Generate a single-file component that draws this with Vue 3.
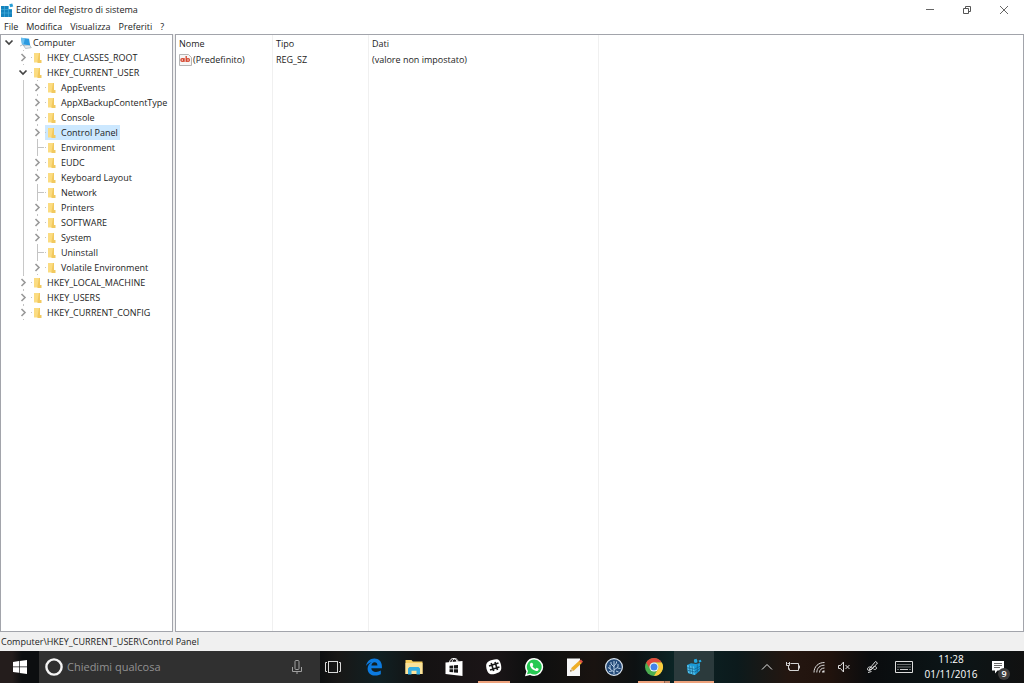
<script setup>
import { ref } from 'vue'

const menus = ['File', 'Modifica', 'Visualizza', 'Preferiti', '?']

const roots = [
  { name: 'HKEY_CLASSES_ROOT' },
  {
    name: 'HKEY_CURRENT_USER',
    children: [
      { name: 'AppEvents' },
      { name: 'AppXBackupContentType' },
      { name: 'Console' },
      { name: 'Control Panel' },
      { name: 'Environment', leaf: true },
      { name: 'EUDC' },
      { name: 'Keyboard Layout' },
      { name: 'Network', leaf: true },
      { name: 'Printers' },
      { name: 'SOFTWARE' },
      { name: 'System' },
      { name: 'Uninstall', leaf: true },
      { name: 'Volatile Environment' },
    ],
  },
  { name: 'HKEY_LOCAL_MACHINE' },
  { name: 'HKEY_USERS' },
  { name: 'HKEY_CURRENT_CONFIG' },
]

const selected = ref('Control Panel')
const query = ref('')
</script>

<template>
  <div class="desktop">
    <header class="titlebar">
      <svg class="app-icon" viewBox="0 0 14 14" aria-hidden="true">
        <path d="M1 3h7.500v3H12v8H1z" fill="#1583bd" />
        <path d="M1 6.500h11M1 10h11M4.500 3v11M8.500 3v11" stroke="#4bb4e0" stroke-width=".6" />
        <path d="M9.300 1.200l3-.8.900 3-3 .8z" fill="#2a9fd6" />
      </svg>
      <h1>Editor del Registro di sistema</h1>
      <div class="window-buttons">
        <button type="button" aria-label="Riduci a icona">
          <svg viewBox="0 0 10 10"><path d="M1 4.500h8" stroke="#666" /></svg>
        </button>
        <button type="button" aria-label="Ripristina">
          <svg viewBox="0 0 10 10"><path d="M1.500 3.500h5v5h-5zM3.500 3V1.500h5v5H7" fill="none" stroke="#555" /></svg>
        </button>
        <button type="button" aria-label="Chiudi">
          <svg viewBox="0 0 10 10"><path d="M1 1l8 8M9 1L1 9" stroke="#666" /></svg>
        </button>
      </div>
    </header>

    <nav class="menubar">
      <button v-for="m in menus" :key="m" type="button">{{ m }}</button>
    </nav>

    <main class="panes">
      <section class="tree">
        <div class="row">
          <svg class="twist" viewBox="0 0 14 15"><path d="M3.500 5.500l3.500 3.500L10.500 5.500" fill="none" stroke="#444" stroke-width="1.700" /></svg>
          <button type="button" class="key">
            <svg class="icon" viewBox="0 0 12 12">
              <path d="M3.500 8.500l6-.5 1.800 2.700-5.800.8z" fill="#e4eaee" stroke="#93a2ad" stroke-width=".6" />
              <path d="M1 .800l8 1 1.200 6.500L2 7.500z" fill="#2c9be0" />
              <path d="M1 .800l4 .5L3.500 7.600 2 7.500z" fill="#6cc0f0" />
              <path d="M0 9l2.500-1.200 2 1.200" fill="none" stroke="#93a2ad" stroke-width=".7" />
            </svg>
            Computer
          </button>
        </div>
        <ul class="level-one">
          <li v-for="root in roots" :key="root.name">
            <div class="row">
              <svg class="twist" viewBox="0 0 14 15">
                <path v-if="root.children" d="M3.500 5.500l3.500 3.500L10.500 5.500" fill="none" stroke="#444" stroke-width="1.700" />
                <template v-else>
                  <path d="M7.500 0v1M7.500 14v1" stroke="#c4c4c4" />
                  <path d="M5.500 4l3.500 3.500L5.500 11" fill="none" stroke="#999" stroke-width="1.600" />
                </template>
              </svg>
              <button type="button" class="key branch" @click="selected = root.name">
                <svg class="icon" viewBox="0 0 12 12">
                  <path d="M0 1h6v9.500H0z" fill="#fbdc82" /><path d="M5 1h1v7h1.500v3H3.500V9z" fill="#f2c95f" />
                </svg>
                {{ root.name }}
              </button>
            </div>
            <ul v-if="root.children" class="level-two">
              <li v-for="key in root.children" :key="key.name" class="row">
                <svg class="twist" viewBox="0 0 14 15">
                  <path v-if="key.leaf" d="M7.500 0v15M7.500 7.500H14" stroke="#c4c4c4" />
                  <template v-else>
                    <path d="M7.500 0v1M7.500 14v1" stroke="#c4c4c4" />
                    <path d="M5.500 4l3.500 3.500L5.500 11" fill="none" stroke="#999" stroke-width="1.600" />
                  </template>
                </svg>
                <button type="button" class="key branch" :class="{ selected: key.name === selected }" @click="selected = key.name">
                  <svg class="icon" viewBox="0 0 12 12">
                    <path d="M0 1h6v9.500H0z" fill="#fbdc82" /><path d="M5 1h1v7h1.500v3H3.500V9z" fill="#f2c95f" />
                  </svg>
                  {{ key.name }}
                </button>
              </li>
            </ul>
          </li>
        </ul>
      </section>

      <section class="values">
        <table>
          <colgroup><col class="c-name"><col class="c-type"><col class="c-data"><col></colgroup>
          <thead>
            <tr><th>Nome</th><th>Tipo</th><th>Dati</th><td></td></tr>
          </thead>
          <tbody>
            <tr>
              <td>
                <span class="value-name">
                  <svg class="string-icon" viewBox="0 0 13 12">
                    <path d="M.5.500h9l3 3v8H.5z" fill="#f6f6f6" stroke="#b5b5b5" />
                    <g fill="none" stroke="#d5432b" stroke-width="1.300">
                      <circle cx="3.300" cy="6" r="1.400" /><path d="M5 4v4M7.200 2v6" /><circle cx="9" cy="6" r="1.400" />
                    </g>
                  </svg>
                  (Predefinito)
                </span>
              </td>
              <td>REG_SZ</td>
              <td>(valore non impostato)</td>
              <td></td>
            </tr>
            <tr class="rest"><td></td><td></td><td></td><td></td></tr>
          </tbody>
        </table>
      </section>
    </main>

    <footer class="statusbar">Computer\HKEY_CURRENT_USER\Control Panel</footer>

    <div class="taskbar">
      <button type="button" class="start" aria-label="Start">
        <svg viewBox="0 0 14 14"><path d="M0 2l6-.9v5.500H0zM6.700 1L14 0v6.600H6.700zM0 7.300h6v5.500L0 12zM6.700 7.300H14V14l-7.300-1z" fill="#fff" /></svg>
      </button>
      <div class="search">
        <svg class="cortana" viewBox="0 0 18 18"><circle cx="9" cy="9" r="7.600" fill="none" stroke="#f4f4f4" stroke-width="2.400" /></svg>
        <input v-model="query" type="text" placeholder="Chiedimi qualcosa" aria-label="Chiedimi qualcosa">
        <button type="button" aria-label="Microfono">
          <svg class="mic" viewBox="0 0 10 14"><g fill="none" stroke="#a0a0a0"><rect x="3" y=".5" width="4" height="9" rx="1" /><path d="M.5 7v4.500h9V7M5 11.500V14" /></g></svg>
        </button>
      </div>

      <div class="apps">
        <button type="button" class="task-view" aria-label="Visualizzazione attività">
          <svg viewBox="0 0 20 20"><g fill="none" stroke="#d8d8d8"><rect x="5.500" y="4.500" width="9" height="11" /><path d="M4 5.500H2.500v9H4M16 5.500h1.500v9H16" /></g></svg>
        </button>
        <button type="button" aria-label="Edge">
          <svg viewBox="0 0 20 20"><path d="M2 9C2.700 4.500 6 1.500 10.300 1.500c4.700 0 7.600 3.300 7.600 7.700v2H7.300c.2 2.500 2.300 3.700 4.700 3.700 1.800 0 3.400-.5 4.800-1.400v3.800c-1.700.9-3.600 1.300-5.600 1.300-4.500 0-7.600-2.700-7.600-6.900 0-2.800 1.500-5.200 4.200-6.400C4.800 6 3.200 7.100 2 9zm5.400-.6h6c0-2-1-3.200-2.800-3.200S7.600 6.500 7.400 8.400z" fill="#0c7be0" /></svg>
        </button>
        <button type="button" aria-label="Esplora file">
          <svg viewBox="0 0 20 20"><path d="M1.500 3h6l1.300 1.500h9.700V17h-17z" fill="#f7cf61" /><path d="M1.500 6h17v11h-17z" fill="#fbe39b" /><path d="M4 17.500v-6l1.500-1.500h9l1.500 1.500v6h-3.500v-3.700h-5v3.700z" fill="#35aee2" /></svg>
        </button>
        <button type="button" aria-label="Store">
          <svg viewBox="0 0 20 20"><path d="M1.500 5.500L18.500 4v15L1.500 17z" fill="#fff" /><path d="M5.500 6c0-6 7.500-6 7.500-.5M8 5.500c0-5 6-5 6-.5" fill="none" stroke="#fff" /><path d="M5.500 8.700l3.700-.3v3.200H5.500zM10 8.300l4-.3v3.600h-4zM5.500 12.300h3.700v3l-3.700-.3zM10 12.300h4v3.500l-4-.4z" fill="#151515" /></svg>
        </button>
        <button type="button" class="open" aria-label="Slack">
          <svg viewBox="0 0 20 20"><path d="M8 3C14 1.300 15.700 2.300 17 8c1 5.500-.5 7.200-5.500 8.700-5.500 1.500-7.500.3-9-5C1.300 6.300 3 4.500 8 3z" fill="#fff" /><path d="M7.200 6l2.500 8M11 5l2.500 8M5 9l9.500-3M6 13l9.500-3" stroke="#181818" stroke-width="1.600" /></svg>
        </button>
        <button type="button" aria-label="WhatsApp">
          <svg viewBox="0 0 20 20"><path d="M10.200 1a9 9 0 0 1 0 18c-1.500 0-3-.4-4.200-1L1 19.300l1.400-4.800A9 9 0 0 1 10.200 1z" fill="#fff" /><path d="M10.200 2.500a7.500 7.500 0 1 1-3.800 14L3 17.300l1-3.200a7.500 7.500 0 0 1 6.200-11.600z" fill="#26c953" /><path d="M7.300 5.800l1.200.3.8 2-.8 1.100c.8 1.300 1.700 2.100 3 2.700l1.100-1.200 2 1c.2 1.500-1.200 2.500-2.500 2.300-3.200-.6-6-3.500-6.200-6.200 0-1 .6-1.700 1.400-2z" fill="#fff" /></svg>
        </button>
        <button type="button" aria-label="Editor di testo">
          <svg viewBox="0 0 20 20"><path d="M3 1.500h13V19H3z" fill="#f7f7f7" /><path d="M6.300 14.500l1-3.500 8.200-7.500 2.400 2.500-8.200 7.700z" fill="#eeae28" /><path d="M15 4l2-1.500 2 2.300-1.500 1.500z" fill="#dd5145" /><path d="M6.300 14.500l1-3.500 2.400 2.700z" fill="#dfc69b" /><path d="M6.300 14.500l.4-1.400.9 1z" fill="#222" /></svg>
        </button>
        <button type="button" aria-label="SourceTree">
          <svg viewBox="0 0 20 20"><circle cx="10" cy="10" r="8.400" fill="#244a78" stroke="#dce5ef" stroke-width="1.200" /><path d="M10 17V4M10 15l-4-3V8M10 13l4-3V7M10 10L7 7V5M10 9l2.500-3V4.500M6.500 12L4 10.500M13.500 11l3 .5M8 14l-3 .5M12 14l2.500 1" fill="none" stroke="#b8cee5" stroke-width="1" /></svg>
        </button>
        <button type="button" class="open grouped" aria-label="Chrome">
          <svg viewBox="0 0 20 20"><circle cx="10" cy="10" r="9" fill="#4cae50" /><path d="M2.200 5.500A9 9 0 0 1 17.800 5.500H10a4.500 4.500 0 0 0-3.900 6.700z" fill="#df4a3c" /><path d="M17.800 5.500A9 9 0 0 1 10 19l3.900-6.800A4.500 4.500 0 0 0 10 5.500z" fill="#fccb3d" /><circle cx="10" cy="10" r="4.500" fill="#fff" /><circle cx="10" cy="10" r="3.500" fill="#4384e8" /></svg>
        </button>
        <button type="button" class="open active" aria-label="Editor del Registro di sistema">
          <svg viewBox="0 0 20 20">
            <path d="M3 8l4-1.800L12 7l4-1v7.500l-5 4.500-7-2z" fill="#1b9ad6" />
            <path d="M3 8l7 1.500L11 18l-7-2z" fill="#4fc0ec" />
            <path d="M3.300 10.700l7 1.600 5.700-3M3.700 13.300l7 1.700 5.300-3.500M5.500 8.500l.8 8M8 9l.8 8.500M13.300 7.500v8" fill="none" stroke="#145f88" stroke-width=".7" />
            <path d="M10 2.500l2.500-.7 1 2.200-.3 1.500-2.500.5-.8-1.800zM14.500 3.500l2.300-.8.7 2-2.200.9z" fill="#27a8df" />
          </svg>
        </button>
      </div>

      <div class="tray">
        <button type="button" aria-label="Mostra icone nascoste">
          <svg viewBox="0 0 16 16"><path d="M3 10.500l5-5 5 5" fill="none" stroke="#e8e8e8" /></svg>
        </button>
        <button type="button" aria-label="Batteria">
          <svg viewBox="0 0 16 16"><path d="M5.500 4.500h8v7h-9V9.500M14.500 6.500v3M1.500 3v3.500h3V3M3.500 6.500v4h1.500M2.500 4.500h2" fill="none" stroke="#d4d4d4" /></svg>
        </button>
        <button type="button" aria-label="Rete">
          <svg viewBox="0 0 16 16"><g fill="none" stroke="#ddd"><path d="M3 13.500C3 7.500 7.500 3.500 13.500 3.500M5.800 13.500c0-4.500 3.200-7.300 7.700-7.300M8.500 13.500c0-2.700 2-4.500 5-4.500" /></g><path d="M11 13.500c0-1.500 1-2.300 2.500-2.300v2.300z" fill="#ddd" /></svg>
        </button>
        <button type="button" class="t-sound" aria-label="Volume">
          <svg viewBox="0 0 16 16"><path d="M2.500 6.500h2l3-3.500v10l-3-3.500h-2zM9.500 6l4 4M13.500 6l-4 4" fill="none" stroke="#ddd" /></svg>
        </button>
        <button type="button" class="wide" aria-label="Penna">
          <svg viewBox="0 0 16 16"><path d="M6 9l5.500-6.500L13.500 4 8 10l-3 1zM9 10c-2-3.500-6-2-5.500.5.500 2 4.500.5 5-1.500.8-2 4-2 4 0 0 1.500-2 2-3 1M4 13.500l3.500-1" fill="none" stroke="#ddd" /></svg>
        </button>
        <button type="button" class="wide" aria-label="Tastiera">
          <svg class="keyboard" viewBox="0 0 18 12"><path d="M.5.500h17v11H.5z" fill="none" stroke="#ddd" /><path d="M2.500 3.500h13M2.500 6h13" stroke="#ccc" stroke-dasharray="1 1" /><path d="M2.500 8.500h1M5 8.500h8M14.500 8.500h1" stroke="#ccc" /></svg>
        </button>
        <button type="button" class="clock"><span>11:28</span><span>01/11/2016</span></button>
        <button type="button" class="notify" aria-label="Centro notifiche">
          <svg viewBox="0 0 14 14"><path d="M1 1h12v9.500H6.500L4 13.500v-3H1z" fill="#fff" /><path d="M3 3.500h8M3 5.500h8M3 7.500h6" stroke="#444" stroke-width=".8" /></svg>
          <span class="badge">9</span>
        </button>
      </div>
    </div>
  </div>
</template>

<style>
body {
  background: #fff;
}
</style>

<style scoped>
.desktop {
  display: flex;
  flex-direction: column;
  height: 100vh;
  overflow: hidden;
  background: #fff;
  color: #1c1c1c;
  font: 9px/15px "Open Sans", "Noto Sans", sans-serif;
}
button {
  margin: 0;
  padding: 0;
  border: 0;
  background: none;
  color: inherit;
  font: inherit;
}
svg {
  display: block;
  flex: none;
}
ul {
  margin: 0;
  padding: 0;
  list-style: none;
}
.titlebar {
  display: flex;
  align-items: center;
  height: 19px;
  flex: none;
}
.app-icon {
  width: 14px;
  height: 14px;
  margin-right: 2px;
}
h1 {
  margin: 0;
  font: inherit;
}
.window-buttons {
  display: flex;
  margin-left: auto;
  padding-right: 2px;
}
.window-buttons button {
  display: flex;
  align-items: center;
  justify-content: center;
  width: 37px;
  height: 19px;
}
.window-buttons svg {
  width: 10px;
  height: 10px;
}
.menubar {
  display: flex;
  flex: none;
  gap: 8px;
  height: 15px;
  padding-left: 4px;
}
.panes {
  display: flex;
  flex: 1;
  gap: 2px;
  min-height: 0;
  background: #f0f0f0;
}
.tree,
.values {
  box-sizing: border-box;
  border: 1px solid #a2a4ab;
  background: #fff;
  overflow: hidden;
}
.tree {
  width: 173px;
  flex: none;
  padding-left: 1px;
}
.row {
  display: flex;
  height: 15px;
}
.twist {
  width: 14px;
  height: 15px;
}
.key {
  display: flex;
  align-items: center;
  gap: 1px;
  height: 15px;
  margin-left: 1px;
  padding: 0 2px 0 3px;
  white-space: nowrap;
}
.branch {
  background: linear-gradient(#c4c4c4, #c4c4c4) left center / 1px 1px no-repeat;
}
.key.selected {
  background-color: #cce8ff;
}
.icon {
  width: 12px;
  height: 12px;
}
.level-one {
  padding-left: 14px;
}
.level-two {
  margin-left: 7px;
  padding-left: 6px;
  border-left: 1px solid #c8c8c8;
}
.values {
  flex: 1;
}
table {
  width: 100%;
  height: 100%;
  table-layout: fixed;
  border-collapse: separate;
  border-spacing: 0;
}
.c-name {
  width: 97px;
}
.c-type {
  width: 96px;
}
.c-data {
  width: 230px;
}
th,
td {
  height: 16px;
  padding: 0 3px;
  border-right: 1px solid #f0f0f0;
  font-weight: 400;
  line-height: 16px;
  text-align: left;
  white-space: nowrap;
}
th {
  height: 17px;
}
th:last-child,
td:last-child {
  border-right: 0;
}
.rest td {
  height: auto;
}
.value-name {
  display: flex;
  align-items: center;
  gap: 1px;
}
.string-icon {
  width: 13px;
  height: 12px;
}
.statusbar {
  flex: none;
  height: 19px;
  padding-left: 1px;
  background: #f0f0f0;
  line-height: 20px;
}
.taskbar {
  display: flex;
  flex: none;
  height: 32px;
  color: #fff;
  background: linear-gradient(90deg, #241d1c 0 12px, #0c0e10 22px 31%, #181716 33%, #102023 37%, #141212 41%, #1b1517 48%, #0d0f0f 52%, #191310 58%, #0d1112 62%, #0b2526 66%, #0c1a1c 72%, #241610 77%, #21130d 81%, #0a0c0e 85%, #0b1517 93%, #111 100%);
}
.start,
.apps button,
.tray button,
.search button {
  display: flex;
  align-items: center;
  justify-content: center;
}
.start {
  width: 39px;
}
.start svg {
  width: 14px;
  height: 14px;
}
.search {
  display: flex;
  align-items: center;
  box-sizing: border-box;
  width: 275px;
  padding: 0 12px 0 6px;
  background: #303030;
}
.cortana {
  width: 18px;
  height: 18px;
}
.search input {
  flex: 1;
  min-width: 0;
  margin: 0;
  padding: 0 0 0 4px;
  border: 0;
  outline: 0;
  background: none;
  color: #ddd;
  font: 11px/16px "Open Sans", "Noto Sans", sans-serif;
}
.search input::placeholder {
  color: #929292;
  opacity: 1;
}
.search {
  width: 281px;
  padding-right: 18px;
}
.mic {
  width: 10px;
  height: 14px;
}
.apps {
  display: flex;
}
.apps button {
  width: 40px;
}
.apps .task-view {
  width: 34px;
  padding-right: 8px;
}
.apps svg {
  width: 20px;
  height: 20px;
}
.apps .open {
  background: linear-gradient(#eda27c, #eda27c) center bottom / 32px 2px no-repeat;
}
.apps .grouped {
  background: linear-gradient(90deg, #eda27c 26px, #8f6551 26px 27px, #c98b6c 27px) center bottom / 32px 2px no-repeat;
}
.apps .active {
  background: linear-gradient(#eda27c, #eda27c) center bottom / 40px 2px no-repeat, #2b3a3c;
}
.tray {
  display: flex;
  margin-left: auto;
}
.tray button {
  width: 26px;
}
.tray svg {
  width: 16px;
  height: 16px;
}
.tray .keyboard {
  width: 18px;
  height: 12px;
}
.tray .t-sound {
  width: 24px;
}
.tray .wide {
  width: 32px;
}
.tray .clock {
  flex-direction: column;
  width: 62px;
  font-size: 10px;
}
.tray .notify {
  position: relative;
  width: 32px;
  margin-right: 10px;
}
.tray .notify svg {
  width: 14px;
  height: 14px;
}
.badge {
  position: absolute;
  right: 4px;
  bottom: 3px;
  width: 12px;
  height: 12px;
  border-radius: 50%;
  background: #3c3c3c;
  font-size: 9px;
  font-weight: 600;
  line-height: 12px;
  text-align: center;
}
</style>
